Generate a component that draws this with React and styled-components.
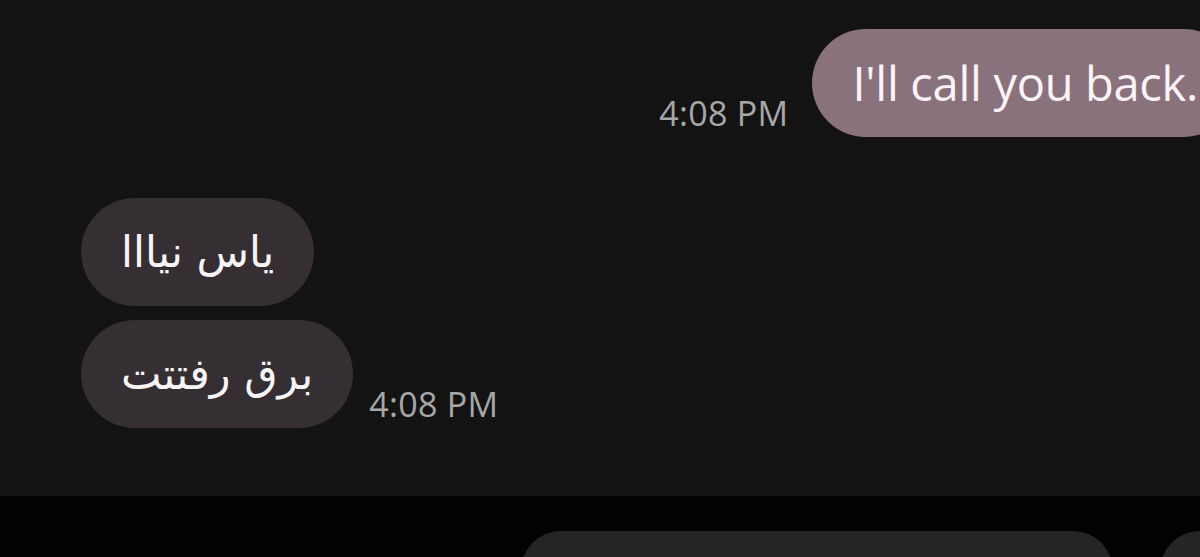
import React from "react";
import styled, { createGlobalStyle } from "styled-components";

const Global = createGlobalStyle`
  html, body { margin: 0; padding: 0; background: #020202; }
  body { font-family: "Open Sans", "DejaVu Sans", sans-serif; }
`;

const Screen = styled.div`
  width: 1200px;
  height: 557px;
  overflow: hidden;
  display: flex;
  flex-direction: column;
`;

const Thread = styled.div`
  height: 496px;
  flex: none;
  background: #131313;
  display: flex;
  flex-direction: column;
  padding-top: 29px;
  box-sizing: border-box;
`;

const Row = styled.div`
  display: flex;
  align-items: flex-end;
  gap: ${(p) => (p.$out ? 24 : 16)}px;
  justify-content: ${(p) => (p.$out ? "flex-end" : "flex-start")};
  margin-top: ${(p) => p.$top || 0}px;
  padding-left: ${(p) => (p.$out ? 0 : 81)}px;
  margin-right: ${(p) => (p.$out ? -38 : 0)}px;
`;

const Bubble = styled.div`
  height: 108px;
  box-sizing: border-box;
  padding: 0 40px;
  border-radius: 54px;
  display: flex;
  align-items: center;
  white-space: nowrap;
  background: ${(p) => (p.$out ? "#8a727d" : "#352e32")};
  color: ${(p) => (p.$out ? "#fbf3f6" : "#f7f4f5")};
  font-family: ${(p) =>
    p.$rtl ? '"DejaVu Sans", sans-serif' : '"Open Sans", sans-serif'};
  font-size: ${(p) => (p.$rtl ? 43 : 47)}px;
  letter-spacing: ${(p) => (p.$rtl ? 0 : -0.3)}px;
`;

const Time = styled.span`
  font-family: "Open Sans", sans-serif;
  font-size: 34px;
  letter-spacing: 0.3px;
  color: #a7a7a7;
  line-height: 1;
  padding-bottom: 7px;
  white-space: nowrap;
`;

const Composer = styled.div`
  flex: 1;
  display: flex;
  align-items: flex-start;
  padding: 35px 0 0 521px;
  gap: 47px;
  background: #020202;
`;

const Field = styled.div`
  width: 592px;
  height: 80px;
  flex: none;
  border-radius: 40px;
  background: #252525;
`;

const RoundButton = styled.div`
  width: 80px;
  height: 80px;
  flex: none;
  border-radius: 50%;
  background: #252525;
`;

export default function App() {
  return (
    <>
      <Global />
      <Screen>
        <Thread>
          <Row $out>
            <Time>4:08 PM</Time>
            <Bubble $out>I'll call you back.</Bubble>
          </Row>
          <Row $top={61}>
            <Bubble $rtl dir="rtl">یاس نیااا</Bubble>
          </Row>
          <Row $top={14}>
            <Bubble $rtl dir="rtl">برق رفتتت</Bubble>
            <Time>4:08 PM</Time>
          </Row>
        </Thread>
        <Composer>
          <Field />
          <RoundButton />
        </Composer>
      </Screen>
    </>
  );
}
